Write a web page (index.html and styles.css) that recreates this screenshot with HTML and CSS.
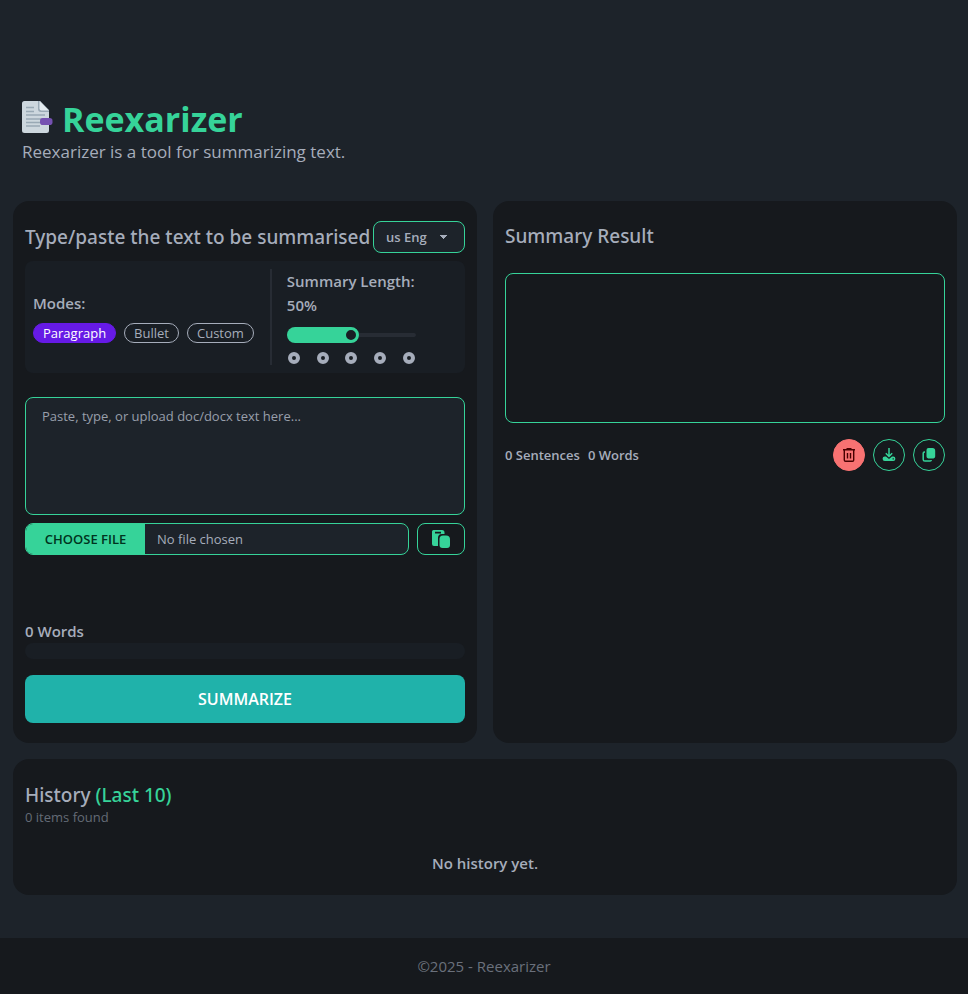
FILE: index.html
```html
<!DOCTYPE html>
<html lang="en">
<head>
<meta charset="utf-8">
<meta name="viewport" content="width=device-width, initial-scale=1">
<title>Reexarizer</title>
<link rel="stylesheet" href="styles.css">
</head>
<body>
<main class="page">
  <header class="hero">
    <h1 class="brand">
      <svg class="brand-icon" viewBox="0 0 32 32" aria-hidden="true">
        <path d="M2.500 0H18L27 10V29.500a2.500 2.500 0 0 1-2.500 2.500H2.500a2.500 2.500 0 0 1-2.500-2.500V2.500a2.500 2.500 0 0 1 2.500-2.500z" fill="#cdd7de"/>
        <path d="M16 0h2l9 9v2h-8a3 3 0 0 1-3-3z" fill="#99a9b5"/>
        <path d="M17.500 0L27 9.500h-7.500a2 2 0 0 1-2-2z" fill="#e4ecf1"/>
        <path d="M4 6.500h8M4 10.500h8M4 14h19M4 18h19M4 21.500h15M4 25h14" stroke="#99a9b5" stroke-width="1.500" fill="none"/>
        <rect x="18" y="17" width="12.500" height="7" rx="2.800" fill="#7551b1"/>
      </svg>
      Reexarizer
    </h1>
    <p class="tagline">Reexarizer is a tool for summarizing text.</p>
  </header>

  <div class="columns">
    <section class="card">
      <div class="card-head">
        <h2 class="title"><label for="source">Type/paste the text to be summarised</label></h2>
        <select class="language" aria-label="Language">
          <option>us Eng</option>
        </select>
      </div>
      <div class="options">
        <div class="modes">
          <p class="label">Modes:</p>
          <div class="badges">
            <button type="button" class="badge badge-active">Paragraph</button>
            <button type="button" class="badge">Bullet</button>
            <button type="button" class="badge">Custom</button>
          </div>
        </div>
        <div class="divider"></div>
        <div class="length">
          <label class="label" for="length">Summary Length: 50%</label>
          <input class="range" id="length" type="range" min="0" max="100" step="25" value="50">
          <div class="ticks"><i></i><i></i><i></i><i></i><i></i></div>
        </div>
      </div>
      <textarea class="source" id="source" placeholder="Paste, type, or upload doc/docx text here..."></textarea>
      <div class="upload">
        <input class="file" type="file" aria-label="Document to upload">
        <button type="button" class="paste" aria-label="Paste">
          <svg viewBox="0 0 20 20" aria-hidden="true">
            <path fill-rule="evenodd" d="M2.500 1H11a2.500 2.500 0 0 1 2.500 2.500V5H11a4 4 0 0 0-4 4v8H3a2 2 0 0 1-2-2V2.500A1.500 1.500 0 0 1 2.500 1zM4 2.700V4.500h6V2.700z"/>
            <path d="M12 6.500h3a4 4 0 0 1 4 4V16a3 3 0 0 1-3 3h-4.500a3 3 0 0 1-3-3v-6A3.500 3.500 0 0 1 12 6.500z"/>
          </svg>
        </button>
      </div>
      <div class="submit">
        <p class="label">0 Words</p>
        <div class="meter"></div>
        <button type="button" class="summarize">SUMMARIZE</button>
      </div>
    </section>

    <section class="card">
      <h2 class="title title-result">Summary Result</h2>
      <div class="result"></div>
      <div class="result-foot">
        <p class="counts"><span>0 Sentences</span><span>0 Words</span></p>
        <button type="button" class="round round-danger" aria-label="Clear">
          <svg viewBox="0 0 16 16" fill="none" stroke="currentColor" stroke-width="1.400" aria-hidden="true">
            <path d="M2 2.800h12M5.500 1.600h5M3.300 3v10a1.200 1.200 0 0 0 1.200 1.200h7a1.200 1.200 0 0 0 1.200-1.200V3M6.500 6v5.500M9.500 6v5.500"/>
          </svg>
        </button>
        <button type="button" class="round" aria-label="Download">
          <svg viewBox="0 0 16 16" aria-hidden="true">
            <path d="M8 1v8.500M4.800 6.300L8 9.500l3.200-3.200" fill="none" stroke="currentColor" stroke-width="1.500"/>
            <path fill-rule="evenodd" fill="currentColor" d="M3.800 9.600H5L8 12l3-2.400h1.200a2.200 2.200 0 0 1 0 4.400H3.800a2.200 2.200 0 0 1 0-4.400zM11.600 11.200v1.200h1.200v-1.200z"/>
          </svg>
        </button>
        <button type="button" class="round" aria-label="Copy">
          <svg viewBox="0 0 16 16" aria-hidden="true">
            <path d="M7.500 1h4a2.700 2.700 0 0 1 2.700 2.700V9.600a1.800 1.800 0 0 1-1.800 1.800H7.300a1.800 1.800 0 0 1-1.800-1.800V3a2 2 0 0 1 2-2z" fill="currentColor"/>
            <path d="M4 4.900h-.5A1.300 1.300 0 0 0 2.200 6.200v6.200A1.700 1.700 0 0 0 3.900 14.100h5.200a1.200 1.200 0 0 0 1.200-1.100" fill="none" stroke="currentColor" stroke-width="1.500"/>
          </svg>
        </button>
      </div>
    </section>
  </div>

  <section class="card history">
    <h2 class="title">History <span class="accent">(Last 10)</span></h2>
    <p class="found">0 items found</p>
    <p class="empty">No history yet.</p>
  </section>
</main>
<footer class="footer">©2025 - Reexarizer</footer>
</body>
</html>
```
FILE: styles.css
```css
:root {
  --base: #1d232a;
  --panel: #191e24;
  --card: #16191d;
  --text: #a6adbb;
  --green: #36d399;
}

* { box-sizing: border-box; }

body {
  margin: 0;
  min-height: 100vh;
  display: flex;
  flex-direction: column;
  background: var(--base);
  color: var(--text);
  font: 15px/24px "Open Sans", "Noto Sans", sans-serif;
}

h1, h2, p { margin: 0; }

button, input, select, textarea {
  margin: 0;
  font: inherit;
  color: inherit;
}

.page {
  flex: 1;
  display: flex;
  flex-direction: column;
  gap: 16px;
  padding: 98px 11px 43px 13px;
}

.hero { padding: 0 9px 21px; }

.brand {
  display: flex;
  align-items: center;
  gap: 8px;
  color: var(--green);
  font-size: 34px;
  font-weight: 700;
  line-height: 42px;
}

.brand-icon {
  width: 32px;
  height: 32px;
  margin-bottom: 4px;
}

.tagline {
  font-size: 17px;
}

.columns {
  display: grid;
  grid-template-columns: 1fr 1fr;
  gap: 16px;
}

.card {
  min-width: 0;
  display: flex;
  flex-direction: column;
  padding: 20px 12px;
  border-radius: 16px;
  background: var(--card);
}

.card-head {
  display: flex;
  align-items: center;
  justify-content: space-between;
}

.title {
  font-family: "Noto Sans", "Open Sans", sans-serif;
  font-size: 19px;
  font-weight: 500;
  line-height: 32px;
  white-space: nowrap;
}

.title-result { line-height: 30px; }

.language {
  flex: none;
  width: 92px;
  height: 32px;
  padding: 0 12px;
  appearance: none;
  border: 1px solid var(--green);
  border-radius: 8px;
  background:
    linear-gradient(45deg, transparent 50%, currentColor 50%) right 20px center / 4px 4px no-repeat,
    linear-gradient(135deg, currentColor 50%, transparent 50%) right 16px center / 4px 4px no-repeat,
    var(--base);
  font-size: 13px;
  font-weight: 600;
}

.options {
  display: flex;
  margin: 8px 0 24px;
  padding: 8px;
  border-radius: 8px;
  background: var(--panel);
}

.modes {
  display: flex;
  flex-direction: column;
  justify-content: center;
  gap: 8px;
}

.label { font-weight: 600; }

.badges {
  display: flex;
  gap: 8px;
}

.badge {
  height: 20px;
  padding: 0 9px;
  border: 1px solid currentColor;
  border-radius: 10px;
  background: transparent;
  font-size: 13px;
  line-height: 18px;
}

.badge-active {
  border-color: #661ae6;
  background: #661ae6;
  color: #fff;
}

.divider {
  width: 2px;
  margin: 0 15px 0 16px;
  background: #272c34;
}

.length {
  width: 129px;
  display: flex;
  flex-direction: column;
}

.range {
  width: 100%;
  height: 16px;
  margin: 10px 0 8px;
  appearance: none;
  overflow: hidden;
  border-radius: 16px;
  background: transparent;
}

.range::-webkit-slider-runnable-track {
  height: 4px;
  border-radius: 4px;
  background: #272c34;
}

.range::-webkit-slider-thumb {
  width: 16px;
  height: 16px;
  margin-top: -6px;
  appearance: none;
  border: 3px solid var(--green);
  border-radius: 50%;
  background: var(--panel);
  box-shadow: -108px 0 0 100px var(--green);
}

.ticks {
  display: flex;
  justify-content: space-between;
  padding: 1px;
}

.ticks i {
  width: 12px;
  height: 12px;
  border: 4px solid var(--text);
  border-radius: 50%;
}

.source {
  width: 100%;
  height: 118px;
  padding: 8px 16px;
  resize: none;
  border: 1px solid var(--green);
  border-radius: 8px;
  background: var(--base);
  font-size: 13px;
  line-height: 20px;
}

.source::placeholder { color: #989fab; }

.upload {
  display: flex;
  gap: 8px;
  margin-top: 8px;
}

.file {
  flex: 1;
  min-width: 0;
  height: 32px;
  overflow: hidden;
  border: 1px solid var(--green);
  border-radius: 8px;
  background: var(--base);
  font-size: 13px;
  line-height: 30px;
}

.file::file-selector-button {
  width: 119px;
  height: 30px;
  margin: 0 12px 0 0;
  padding: 0;
  border: 0;
  background: var(--green);
  color: #003320;
  font: inherit;
  font-weight: 600;
  text-transform: uppercase;
}

.paste {
  width: 48px;
  height: 32px;
  display: grid;
  place-items: center;
  padding: 0;
  border: 1px solid var(--green);
  border-radius: 8px;
  background: transparent;
}

.paste svg {
  width: 20px;
  height: 20px;
  fill: var(--green);
}

.submit { margin-top: 64px; }

.meter {
  height: 16px;
  margin-bottom: 16px;
  border-radius: 8px;
  background: var(--panel);
}

.summarize {
  width: 100%;
  height: 48px;
  border: 0;
  border-radius: 8px;
  background: #20b2aa;
  color: #fff;
  font-size: 16px;
  font-weight: 600;
}

.result {
  height: 150px;
  margin-top: 22px;
  border: 1px solid var(--green);
  border-radius: 8px;
}

.result-foot {
  display: flex;
  align-items: center;
  gap: 8px;
  margin-top: 16px;
}

.counts {
  flex: 1;
  display: flex;
  gap: 8px;
  font-size: 13px;
  font-weight: 600;
}

.round {
  width: 32px;
  height: 32px;
  display: grid;
  place-items: center;
  padding: 0;
  border: 1px solid currentColor;
  border-radius: 50%;
  background: transparent;
  color: var(--green);
}

.round svg {
  width: 16px;
  height: 16px;
}

.round-danger {
  border-color: #f87272;
  background: #f87272;
  color: #470000;
}

.accent { color: var(--green); }

.found {
  color: #646b76;
  font-size: 13px;
  line-height: 12px;
}

.empty {
  margin-top: 28px;
  font-weight: 600;
  text-align: center;
}

.footer {
  padding: 16px;
  background: var(--card);
  color: #6a707b;
  text-align: center;
}
```
